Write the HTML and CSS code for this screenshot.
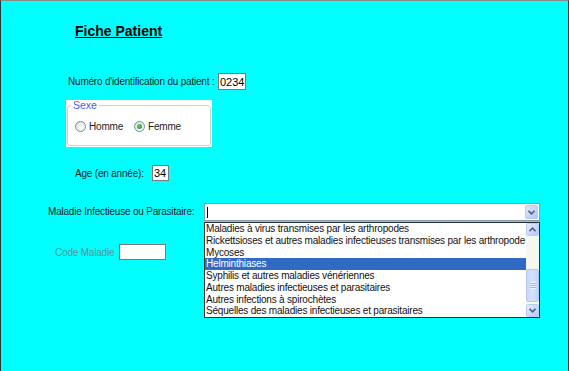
FILE: index.html
```html
<!DOCTYPE html>
<html lang="fr">

<head>
  <meta charset="UTF-8">
  <title>Fiche Patient</title>
  <link rel="stylesheet" href="styles.css">
</head>

<body>
  <div class="window">
    <h1 class="title">Fiche Patient</h1>

    <div class="row row-id">
      <label class="lbl" for="numId">Numéro d'identification du patient :</label>
      <input class="field field-id" id="numId" type="text" value="0234">
    </div>

    <div class="sexe-panel">
      <fieldset class="sexe">
        <legend>Sexe</legend>
        <div class="radios">
          <span class="radio"><span class="dot"></span>Homme</span>
          <span class="radio checked"><span class="dot"></span>Femme</span>
        </div>
      </fieldset>
    </div>

    <div class="row row-age">
      <label class="lbl" for="age">Age (en année):</label>
      <input class="field field-age" id="age" type="text" value="34">
    </div>

    <div class="row row-maladie">
      <label class="lbl">Maladie Infectieuse ou Parasitaire:</label>
      <div class="combo-wrap">
        <div class="combo">
          <span class="combo-text"><span class="caret"></span></span>
          <span class="combo-btn">
            <svg width="7" height="5" viewBox="0 0 7 5"><path d="M0.5 0.8 L3.5 3.8 L6.5 0.8" fill="none" stroke="#4d6185" stroke-width="1.6"/></svg>
          </span>
        </div>
        <div class="dropdown">
          <ul class="items">
            <li>Maladies à virus transmises par les arthropodes</li>
            <li>Rickettsioses et autres maladies infectieuses transmises par les arthropode</li>
            <li>Mycoses</li>
            <li class="selected">Helminthiases</li>
            <li>Syphilis et autres maladies vénériennes</li>
            <li>Autres maladies infectieuses et parasitaires</li>
            <li>Autres infections à spirochètes</li>
            <li>Séquelles des maladies infectieuses et parasitaires</li>
          </ul>
          <div class="scrollbar">
            <span class="sb-btn">
              <svg width="7" height="5" viewBox="0 0 7 5"><path d="M0.5 4.2 L3.5 1.2 L6.5 4.2" fill="none" stroke="#4d6185" stroke-width="1.6"/></svg>
            </span>
            <span class="sb-track"></span>
            <span class="sb-thumb"><span class="grip"></span></span>
            <span class="sb-rest"></span>
            <span class="sb-btn">
              <svg width="7" height="5" viewBox="0 0 7 5"><path d="M0.5 0.8 L3.5 3.8 L6.5 0.8" fill="none" stroke="#4d6185" stroke-width="1.6"/></svg>
            </span>
          </div>
        </div>
      </div>
    </div>

    <div class="row row-code">
      <label class="lbl lbl-off" for="code">Code Maladie</label>
      <input class="field field-code" id="code" type="text" value="">
    </div>
  </div>
</body>

</html>
```

FILE: styles.css
```css
* {
  box-sizing: border-box;
}

body {
  margin: 0;
  font-family: 'Liberation Sans', Arial, sans-serif;
  color: #1c1c1c;
}

.window {
  width: 569px;
  height: 371px;
  background: #00ffff;
  border-top: 1px solid #8a8a8a;
  border-left: 1px solid #1f3b3b;
  border-right: 1px solid #1f3b3b;
  overflow: hidden;
}

.title {
  margin: 22px 0 0 74px;
  font-size: 14px;
  line-height: 16px;
  font-weight: 700;
  color: #000;
  text-decoration: underline;
}

.row {
  display: flex;
  align-items: center;
}

.lbl {
  font-size: 10px;
  letter-spacing: -0.2px;
  white-space: nowrap;
}

.lbl-off {
  color: #4f9898;
}

.field {
  border: 1px solid #7a7a7a;
  background: #fff;
  font-family: 'Liberation Sans', Arial, sans-serif;
  font-size: 11px;
  color: #000;
  padding: 0 0 0 1px;
  margin: 0;
  outline: none;
}

/* Numéro */
.row-id {
  margin: 34px 0 0 67px;
}

.row-id .lbl {
  width: 150px;
}

.field-id {
  width: 28px;
  height: 17px;
}

/* Sexe */
.sexe-panel {
  margin: 10px 0 0 65px;
  width: 146px;
  height: 47px;
  background: #fff;
  padding: 0 1px 1px 1px;
}

.sexe {
  margin: 0;
  height: 46px;
  padding: 0;
  border: 1px solid #d3d3c6;
  border-radius: 3px;
}

.sexe legend {
  margin-left: 3px;
  padding: 0 2px;
  font-size: 10.5px;
  line-height: 11px;
  color: #3a5ef2;
}

.radios {
  display: flex;
  gap: 11px;
  padding: 10px 0 0 7px;
}

.radio {
  display: flex;
  align-items: center;
  gap: 3px;
  font-size: 10px;
  letter-spacing: -0.2px;
}

.dot {
  width: 11px;
  height: 11px;
  border-radius: 50%;
  border: 1px solid #6f8db3;
  background: radial-gradient(circle at 65% 65%, #ffffff 0%, #e9e9e2 60%, #d2d2c8 100%);
  display: flex;
  align-items: center;
  justify-content: center;
}

.radio.checked .dot::after {
  content: "";
  width: 5px;
  height: 5px;
  border-radius: 50%;
  background: radial-gradient(circle at 40% 40%, #6fd36f 0%, #21a121 70%);
}

/* Age */
.row-age {
  margin: 18px 0 0 74px;
}

.row-age .lbl {
  width: 77px;
}

.field-age {
  width: 17px;
  height: 16px;
}

/* Maladie */
.row-maladie {
  margin: 22px 0 0 47px;
  align-items: flex-start;
}

.row-maladie .lbl {
  width: 156px;
  line-height: 18px;
}

.combo-wrap {
  position: relative;
}

.combo {
  width: 336px;
  height: 18px;
  border: 1px solid #7f9db9;
  background: #fff;
  display: flex;
  align-items: stretch;
}

.combo-text {
  flex: 1;
  display: flex;
  align-items: center;
  padding-left: 2px;
}

.caret {
  width: 1px;
  height: 11px;
  background: #000;
}

.combo-btn {
  width: 13px;
  margin: 1px 1px 1px 0;
  border: 1px solid #b7cbf7;
  border-radius: 2px;
  background: linear-gradient(135deg, #dde7fe 0%, #c4d4fb 60%, #b3c7f7 100%);
  display: flex;
  align-items: center;
  justify-content: center;
}

.dropdown {
  position: absolute;
  top: 19px;
  left: 0;
  width: 336px;
  height: 96px;
  border: 1px solid #2f2f2f;
  background: #fff;
  display: flex;
  z-index: 2;
}

.items {
  list-style: none;
  margin: 0;
  padding: 0;
  flex: 1;
  overflow: hidden;
}

.items li {
  height: 11.75px;
  line-height: 11.75px;
  padding-left: 1px;
  font-size: 10px;
  letter-spacing: -0.2px;
  white-space: nowrap;
  color: #111;
}

.items li.selected {
  background: #316ac5;
  color: #fff;
}

.scrollbar {
  width: 13px;
  display: flex;
  flex-direction: column;
  background: #f7f7f2;
}

.sb-btn {
  height: 13px;
  border: 1px solid #bccdf5;
  border-radius: 2px;
  background: linear-gradient(135deg, #e2eafe 0%, #c8d7fb 60%, #b6c9f6 100%);
  display: flex;
  align-items: center;
  justify-content: center;
}

.sb-track {
  height: 33px;
}

.sb-thumb {
  height: 33px;
  border: 1px solid #b5c8f4;
  border-radius: 2px;
  background: linear-gradient(90deg, #c6d6fb 0%, #d6e2fd 50%, #c2d3fa 100%);
  display: flex;
  align-items: center;
  justify-content: center;
}

.grip {
  width: 6px;
  height: 7px;
  background: repeating-linear-gradient(180deg, #eef3ff 0 1px, #9fb6ea 1px 2px);
}

.sb-rest {
  height: 2px;
}

/* Code */
.row-code {
  margin: 23px 0 0 54px;
}

.row-code .lbl {
  width: 64px;
}

.field-code {
  width: 47px;
  height: 16px;
}
```
